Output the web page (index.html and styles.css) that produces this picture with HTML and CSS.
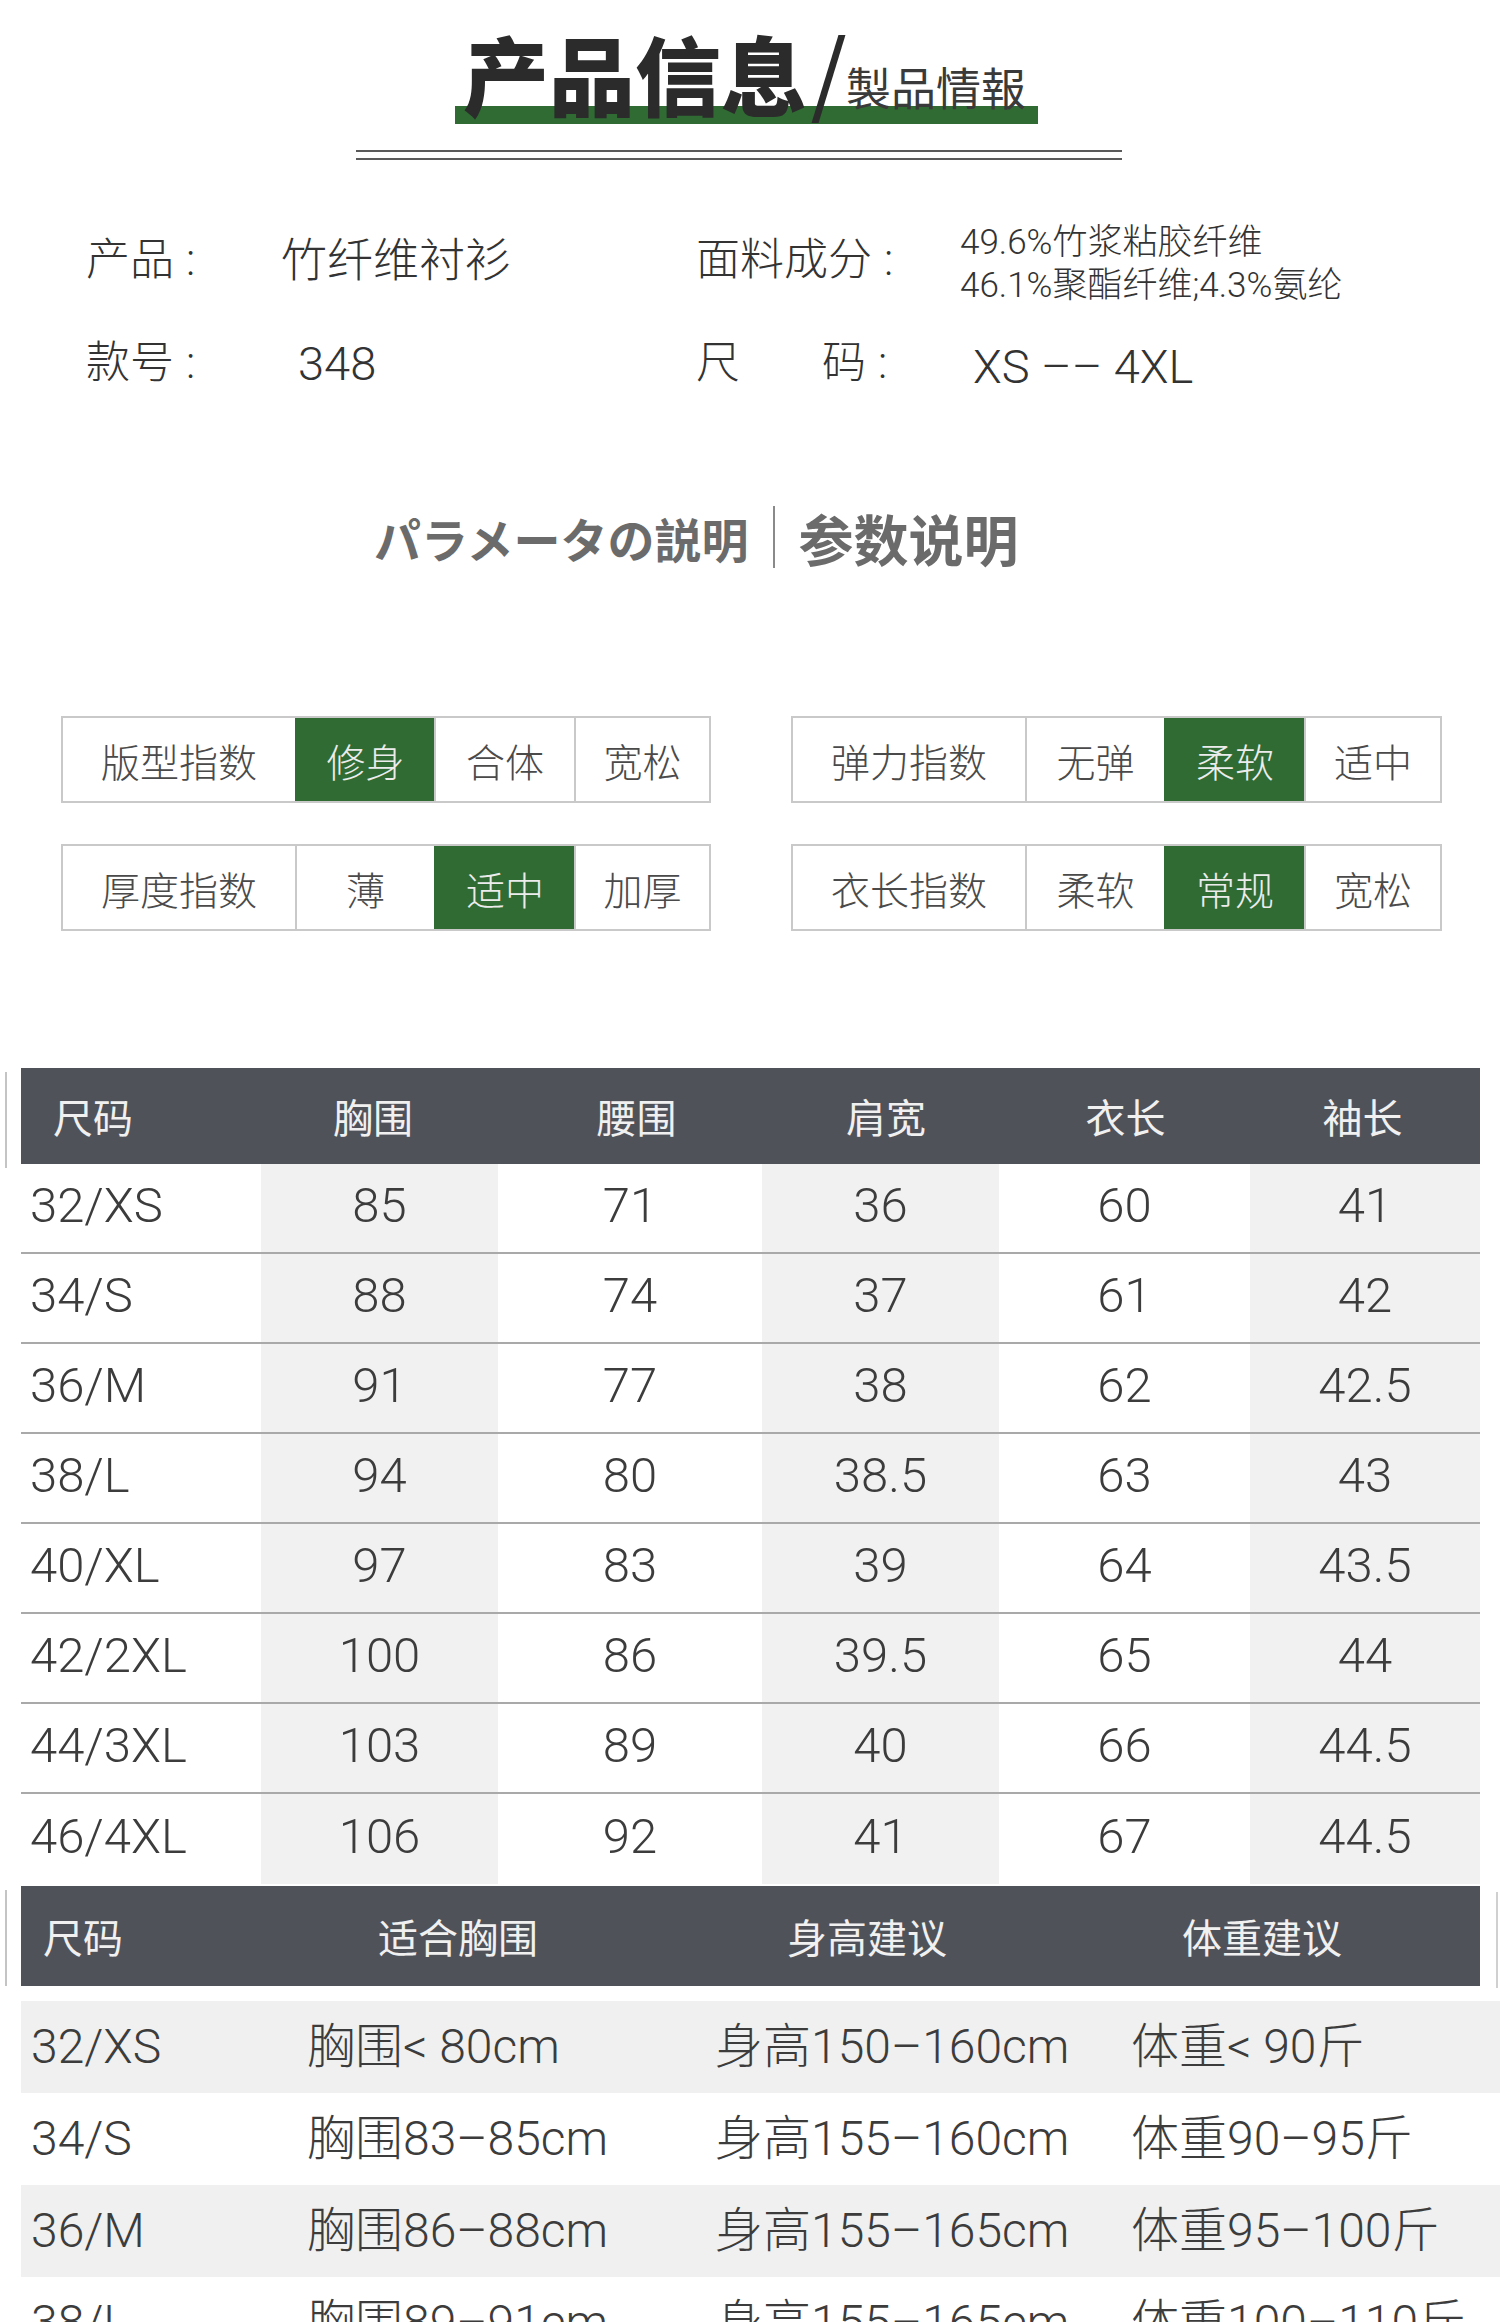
FILE: index.html
```html
<!DOCTYPE html>
<html lang="zh-CN">
<head>
<meta charset="utf-8">
<title>产品信息</title>
<link rel="stylesheet" href="styles.css">
</head>
<body>
<div class="page">
  <header class="head">
    <div class="title">
      <span class="t-main">产品信息</span>
      <span class="slash"></span>
      <span class="t-sub">製品情報</span>
    </div>
    <div class="rules"></div>
  </header>

  <section class="info">
    <div class="lbl">产品<span class="colon">:</span></div>
    <div class="val">竹纤维衬衫</div>
    <div class="lbl">面料成分<span class="colon">:</span></div>
    <div class="comp">
      <div>49.6%竹浆粘胶纤维</div>
      <div>46.1%聚酯纤维;4.3%氨纶</div>
    </div>
    <div class="lbl">款号<span class="colon">:</span></div>
    <div class="val num">348</div>
    <div class="lbl">尺<span class="wide">码</span><span class="colon">:</span></div>
    <div class="val size">XS –– 4XL</div>
  </section>

  <section class="params">
    <span class="p-jp">パラメータの説明</span>
    <span class="p-div"></span>
    <span class="p-cn">参数说明</span>
  </section>

  <section class="indices">
    <div class="idx">
      <div class="cell label">版型指数</div>
      <div class="cell on">修身</div>
      <div class="cell">合体</div>
      <div class="cell">宽松</div>
    </div>
    <div class="idx">
      <div class="cell label">弹力指数</div>
      <div class="cell">无弹</div>
      <div class="cell on">柔软</div>
      <div class="cell">适中</div>
    </div>
    <div class="idx">
      <div class="cell label">厚度指数</div>
      <div class="cell">薄</div>
      <div class="cell on">适中</div>
      <div class="cell">加厚</div>
    </div>
    <div class="idx">
      <div class="cell label">衣长指数</div>
      <div class="cell">柔软</div>
      <div class="cell on">常规</div>
      <div class="cell">宽松</div>
    </div>
  </section>

  <section class="t1">
    <div class="t1-head">
      <div>尺码</div><div>胸围</div><div>腰围</div><div>肩宽</div><div>衣长</div><div>袖长</div>
    </div>
    <div class="t1-row"><div>32/XS</div><div>85</div><div>71</div><div>36</div><div>60</div><div>41</div></div>
    <div class="t1-row"><div>34/S</div><div>88</div><div>74</div><div>37</div><div>61</div><div>42</div></div>
    <div class="t1-row"><div>36/M</div><div>91</div><div>77</div><div>38</div><div>62</div><div>42.5</div></div>
    <div class="t1-row"><div>38/L</div><div>94</div><div>80</div><div>38.5</div><div>63</div><div>43</div></div>
    <div class="t1-row"><div>40/XL</div><div>97</div><div>83</div><div>39</div><div>64</div><div>43.5</div></div>
    <div class="t1-row"><div>42/2XL</div><div>100</div><div>86</div><div>39.5</div><div>65</div><div>44</div></div>
    <div class="t1-row"><div>44/3XL</div><div>103</div><div>89</div><div>40</div><div>66</div><div>44.5</div></div>
    <div class="t1-row"><div>46/4XL</div><div>106</div><div>92</div><div>41</div><div>67</div><div>44.5</div></div>
  </section>

  <section class="t2">
    <div class="t2-head">
      <div>尺码</div><div>适合胸围</div><div>身高建议</div><div>体重建议</div><div></div>
    </div>
    <div class="t2-body">
      <div class="t2-row shade"><div>32/XS</div><div>胸围&lt; 80cm</div><div>身高150–160cm</div><div>体重&lt; 90斤</div></div>
      <div class="t2-row"><div>34/S</div><div>胸围83–85cm</div><div>身高155–160cm</div><div>体重90–95斤</div></div>
      <div class="t2-row shade"><div>36/M</div><div>胸围86–88cm</div><div>身高155–165cm</div><div>体重95–100斤</div></div>
      <div class="t2-row"><div>38/L</div><div>胸围89–91cm</div><div>身高155–165cm</div><div>体重100–110斤</div></div>
    </div>
  </section>
</div>
</body>
</html>
```

FILE: styles.css
```css
* { box-sizing: border-box; }

html, body {
  margin: 0;
  padding: 0;
  background: #ffffff;
}

body {
  font-family: Roboto, "Noto Sans CJK SC", sans-serif;
  font-weight: 300;
  color: #333333;
}

.page {
  width: 1500px;
  overflow: hidden;
}

/* ---------- Title ---------- */
.head {
  padding-top: 30px;
}

.title {
  margin-left: 455px;
  width: 583px;
  height: 94px;
  display: flex;
  align-items: flex-end;
  background: linear-gradient(#2f6b33, #2f6b33) left bottom / 100% 18px no-repeat;
}

.t-main {
  font-family: "Noto Sans CJK SC", sans-serif;
  font-weight: 900;
  font-size: 86px;
  line-height: 86px;
  color: #2b2b2b;
  margin-left: 8px;
  margin-bottom: 8px;
}

.slash {
  display: block;
  width: 7px;
  height: 88px;
  background: #2b2b2b;
  transform: skewX(-17deg);
  margin-left: 18px;
  margin-bottom: 1px;
}

.t-sub {
  font-family: "Noto Sans CJK SC", sans-serif;
  font-weight: 400;
  font-size: 45px;
  line-height: 46px;
  color: #3a3a3a;
  margin-left: 14px;
  margin-bottom: 14px;
}

.rules {
  margin-left: 356px;
  margin-top: 26px;
  width: 766px;
  height: 10px;
  border-top: 2px solid #5a5a5a;
  border-bottom: 2px solid #5a5a5a;
}

/* ---------- Info ---------- */
.info {
  margin-top: 55px;
  margin-left: 86px;
  display: grid;
  grid-template-columns: 195px 415px 264px 1fr;
  grid-template-rows: 90px 88px;
  row-gap: 14px;
  align-items: center;
  font-size: 44px;
  color: #333;
}

.lbl, .val {
  font-family: Roboto, "Noto Sans CJK SC", sans-serif;
  font-weight: 300;
  line-height: 1;
  white-space: nowrap;
}

.val {
  font-size: 46px;
}

.colon {
  margin-left: 12px;
}

.wide {
  margin-left: 82px;
}

.val.num {
  padding-left: 17px;
  font-size: 47px;
}

.val.size {
  padding-left: 13px;
  font-size: 47px;
  padding-top: 6px;
}

.comp {
  font-size: 35px;
  line-height: 43px;
  padding-top: 8px;
  white-space: nowrap;
}

/* ---------- Params heading ---------- */
.params {
  margin-top: 99px;
  margin-left: 374px;
  height: 62px;
  display: flex;
  align-items: center;
  font-family: "Noto Sans CJK SC", sans-serif;
  font-weight: 700;
  color: #6b6b6b;
}

.p-jp {
  font-family: "Noto Sans CJK JP", "Noto Sans CJK SC", sans-serif;
  font-size: 47px;
  line-height: 1;
}

.p-div {
  display: block;
  width: 2px;
  height: 62px;
  background: #8a8a8a;
  margin-left: 24px;
  margin-right: 24px;
}

.p-cn {
  font-size: 55px;
  line-height: 1;
}

/* ---------- Index boxes ---------- */
.indices {
  margin-top: 148px;
  margin-left: 61px;
  display: grid;
  grid-template-columns: 650px 651px;
  column-gap: 80px;
  row-gap: 41px;
}

.idx {
  display: grid;
  grid-template-columns: 232px 139px 140px 1fr;
  height: 87px;
  border: 2px solid #c9c9c9;
}

.cell {
  display: flex;
  align-items: center;
  justify-content: center;
  font-family: "Noto Sans CJK SC", sans-serif;
  font-weight: 300;
  font-size: 39px;
  color: #4a4a4a;
  border-left: 2px solid #c9c9c9;
}

.cell.label {
  border-left: none;
}

.cell.on {
  background: #2f6b33;
  color: #ececec;
  border-left-color: #2f6b33;
}

.cell.on + .cell {
  border-left-color: #c9c9c9;
}

/* ---------- Table 1 ---------- */
.t1 {
  margin-top: 137px;
  margin-left: 21px;
  width: 1459px;
}

.t1-head {
  position: relative;
  height: 96px;
  background: #50525a;
  display: grid;
  grid-template-columns: 218px 268px 259px 240px 239px 1fr;
  align-items: center;
  font-family: "Noto Sans CJK SC", sans-serif;
  font-weight: 400;
  font-size: 40px;
  color: #f0f0f0;
  text-align: center;
}

.t1-head > div:first-child {
  text-align: left;
  padding-left: 32px;
}

.t1-head::before,
.t2-head::before {
  content: "";
  position: absolute;
  left: -16px;
  top: 4px;
  width: 2px;
  height: 96px;
  background: #c4c4c4;
}

.t2-head::after {
  content: "";
  position: absolute;
  right: -18px;
  top: 6px;
  width: 2px;
  height: 96px;
  background: #d0d0d0;
}

.t1-row {
  display: grid;
  grid-template-columns: 240px 237px 264px 237px 251px 1fr;
  height: 90px;
  border-bottom: 2px solid #a9a9a9;
  font-size: 49px;
  color: #3c3c3c;
  text-align: center;
}

.t1-row:last-child {
  border-bottom: none;
}

.t1-row > div {
  display: flex;
  align-items: center;
  justify-content: center;
  line-height: 1;
  padding-bottom: 6px;
}

.t1-row > div:first-child {
  justify-content: flex-start;
  padding-left: 9px;
}

.t1-row > div:nth-child(2),
.t1-row > div:nth-child(4),
.t1-row > div:nth-child(6) {
  background: #f1f1f1;
}

/* ---------- Table 2 ---------- */
.t2 {
  margin-top: 2px;
  margin-left: 21px;
}

.t2-head {
  position: relative;
  width: 1459px;
  height: 100px;
  background: #50525a;
  display: grid;
  grid-template-columns: 229px 416px 402px 388px 1fr;
  align-items: center;
  font-family: "Noto Sans CJK SC", sans-serif;
  font-weight: 400;
  font-size: 40px;
  color: #f0f0f0;
  text-align: center;
}

.t2-head > div:first-child {
  text-align: left;
  padding-left: 22px;
}

.t2-body {
  margin-top: 15px;
  width: 1479px;
}

.t2-row {
  display: grid;
  grid-template-columns: 276px 408px 416px 1fr;
  height: 92px;
  align-items: center;
  font-size: 48px;
  color: #3c3c3c;
  white-space: nowrap;
}

.t2-row > div {
  padding-left: 10px;
  line-height: 1;
}

.t2-row.shade {
  background: #f0f0f0;
}
```
